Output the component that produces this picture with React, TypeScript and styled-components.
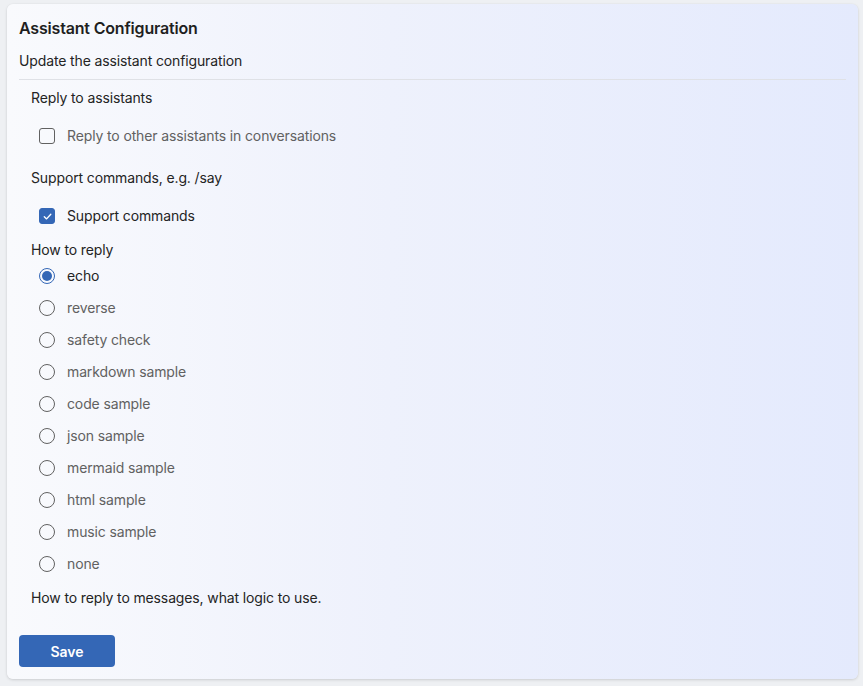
import React, { useState } from "react";
import styled, { createGlobalStyle } from "styled-components";

const GlobalStyle = createGlobalStyle`
  html, body { margin: 0; padding: 0; background: #eef0f3; }
  body { font-family: Inter, "Noto Sans", "Liberation Sans", sans-serif; color: #242424; letter-spacing: -0.13px; }
  * { box-sizing: border-box; }
`;

const Page = styled.div`
  padding: 4px 5px 7px 7px;
  min-height: 686px;
`;

const Card = styled.form`
  width: 851px;
  height: 675px;
  border-radius: 6px;
  background: linear-gradient(to right, #f9fafd 0%, #eef1fc 45%, #e4eafd 100%);
  box-shadow: 0 1px 3px rgba(0, 0, 0, 0.14), 0 0 1px rgba(0, 0, 0, 0.08);
  padding: 12px 12px 12px 12px;
  display: flex;
  flex-direction: column;
`;

const Title = styled.h2`
  margin: 0;
  font-size: 16px;
  font-weight: 600;
  line-height: 24px;
  letter-spacing: -0.18px;
  color: #1f1f1f;
`;

const Subtitle = styled.div`
  margin-top: 11px;
  font-size: 14px;
  line-height: 20px;
  color: #242424;
`;

const Divider = styled.hr`
  margin: 8px 0 0 0;
  border: none;
  height: 1px;
  background: #dfe1e6;
`;

const Body = styled.div`
  padding: 8px 12px 0 12px;
  display: flex;
  flex-direction: column;
`;

const Section = styled.div<{ $after: number }>`
  display: flex;
  flex-direction: column;
  margin-bottom: ${(p) => p.$after}px;
`;

const FieldLabel = styled.div`
  font-size: 14px;
  line-height: 20px;
  color: #242424;
`;

const CheckRow = styled.label`
  margin-top: 12px;
  height: 32px;
  display: flex;
  align-items: center;
  gap: 12px;
  padding-left: 8px;
  cursor: pointer;
`;

const Box = styled.span<{ $checked: boolean }>`
  width: 16px;
  height: 16px;
  border-radius: 3px;
  flex: none;
  display: flex;
  align-items: center;
  justify-content: center;
  border: 1px solid ${(p) => (p.$checked ? "#3467b6" : "#616161")};
  background: ${(p) => (p.$checked ? "#3467b6" : "transparent")};
`;

const OptionText = styled.span<{ $checked: boolean }>`
  font-size: 14px;
  line-height: 20px;
  color: ${(p) => (p.$checked ? "#242424" : "#616161")};
`;

const RadioList = styled.div`
  display: flex;
  flex-direction: column;
`;

const RadioRow = styled.label`
  height: 32px;
  display: flex;
  align-items: center;
  gap: 12px;
  padding-left: 8px;
  cursor: pointer;
`;

const Circle = styled.span<{ $checked: boolean }>`
  width: 16px;
  height: 16px;
  border-radius: 50%;
  flex: none;
  display: flex;
  align-items: center;
  justify-content: center;
  border: 1px solid ${(p) => (p.$checked ? "#3467b6" : "#616161")};
  &::after {
    content: "";
    width: 10px;
    height: 10px;
    border-radius: 50%;
    background: #3467b6;
    display: ${(p) => (p.$checked ? "block" : "none")};
  }
`;

const Helper = styled.div`
  margin-top: 8px;
  font-size: 14px;
  line-height: 20px;
  color: #242424;
`;

const Footer = styled.div`
  margin-top: 27px;
  display: flex;
`;

const SaveButton = styled.button`
  width: 96px;
  height: 32px;
  border: none;
  border-radius: 4px;
  background: #3467b6;
  color: #ffffff;
  font-family: inherit;
  font-size: 14px;
  font-weight: 600;
  cursor: pointer;
`;

const options = [
  "echo",
  "reverse",
  "safety check",
  "markdown sample",
  "code sample",
  "json sample",
  "mermaid sample",
  "html sample",
  "music sample",
  "none",
];

const Check = () => (
  <svg width="11" height="11" viewBox="0 0 12 12" fill="none">
    <path d="M2.5 6.2 L5 8.6 L9.6 3.6" stroke="#fff" strokeWidth="1.5" strokeLinecap="round" strokeLinejoin="round" />
  </svg>
);

export default function App() {
  const [replyOthers, setReplyOthers] = useState(false);
  const [commands, setCommands] = useState(true);
  const [mode, setMode] = useState("echo");

  return (
    <>
      <GlobalStyle />
      <Page>
        <Card onSubmit={(e) => e.preventDefault()}>
          <Title>Assistant Configuration</Title>
          <Subtitle>Update the assistant configuration</Subtitle>
          <Divider />
          <Body>
            <Section $after={16}>
              <FieldLabel>Reply to assistants</FieldLabel>
              <CheckRow onClick={() => setReplyOthers(!replyOthers)}>
                <Box $checked={replyOthers}>{replyOthers && <Check />}</Box>
                <OptionText $checked={replyOthers}>Reply to other assistants in conversations</OptionText>
              </CheckRow>
            </Section>
            <Section $after={8}>
              <FieldLabel>Support commands, e.g. /say</FieldLabel>
              <CheckRow onClick={() => setCommands(!commands)}>
                <Box $checked={commands}>{commands && <Check />}</Box>
                <OptionText $checked={commands}>Support commands</OptionText>
              </CheckRow>
            </Section>
            <Section $after={0}>
              <FieldLabel>How to reply</FieldLabel>
              <RadioList>
                {options.map((o) => (
                  <RadioRow key={o} onClick={() => setMode(o)}>
                    <Circle $checked={mode === o} />
                    <OptionText $checked={mode === o}>{o}</OptionText>
                  </RadioRow>
                ))}
              </RadioList>
              <Helper>How to reply to messages, what logic to use.</Helper>
            </Section>
          </Body>
          <Footer>
            <SaveButton type="submit">Save</SaveButton>
          </Footer>
        </Card>
      </Page>
    </>
  );
}
